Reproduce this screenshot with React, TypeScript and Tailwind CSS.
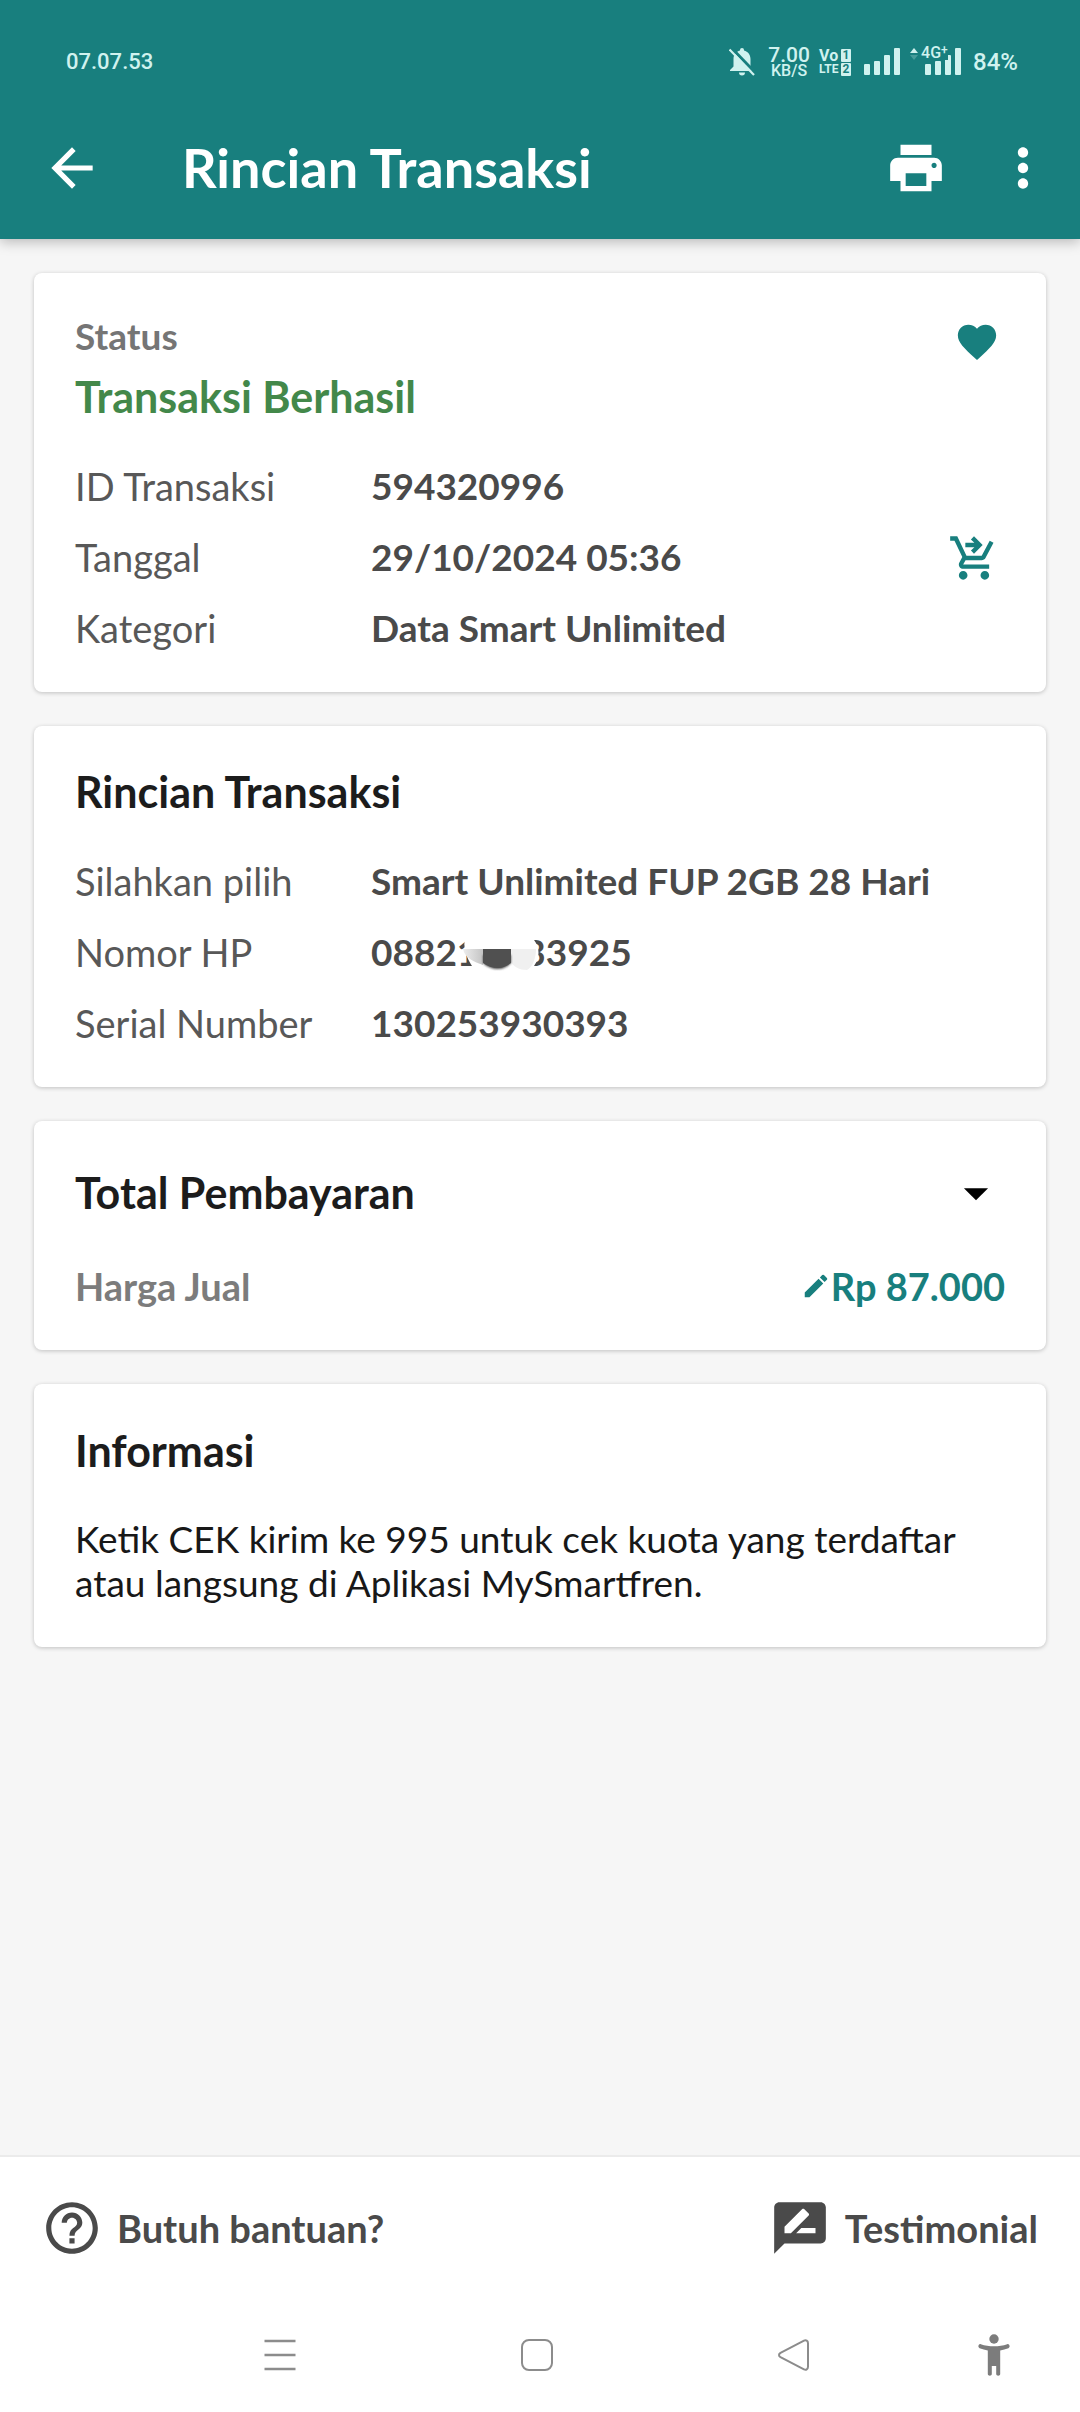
import type { ReactNode } from "react";
import {
  MdArrowBack,
  MdArrowDropDown,
  MdEdit,
  MdFavorite,
  MdHelpOutline,
  MdMoreVert,
  MdPrint,
  MdRateReview,
  MdShoppingCartCheckout,
} from "react-icons/md";

function SignalBars() {
  return (
    <svg width="36" height="28" viewBox="0 0 36 28" fill="currentColor" aria-hidden="true">
      <rect x="0" y="16" width="6" height="11" rx="1" />
      <rect x="10" y="13" width="6" height="14" rx="1" />
      <rect x="20" y="7" width="6" height="20" rx="1" />
      <rect x="30" y="0" width="6" height="27" rx="1" />
    </svg>
  );
}

function StatusBar() {
  return (
    <div className="flex h-[84px] items-center justify-between pt-[40px] pr-[62px] pl-[66px] font-[Roboto] text-[#d0f2ef]">
      <span className="text-[22px] leading-7 font-medium">07.07.53</span>
      <div className="flex items-center">
        <svg width="26" height="28" viewBox="0 0 26 28" aria-hidden="true">
          <path
            fill="currentColor"
            d="M13 0a2 2 0 0 0-2 2v.6C7 3.600 4.500 7 4.500 11v7.500L1 22v1h24v-1l-3.500-3.500V11c0-4-2.500-7.400-6.500-8.400V2a2 2 0 0 0-2-2zM10 24.500a3 3 0 0 0 6 0z"
          />
          <path d="M2.500 0L26 24.500" stroke="#187f7e" strokeWidth="3" />
          <path d="M.5 1.500L25 27" stroke="currentColor" strokeWidth="2.200" />
        </svg>
        <div className="ml-[12px] flex w-[44px] flex-col items-center">
          <span className="text-[21px] leading-[18px] font-medium">7.00</span>
          <span className="text-[16px] leading-[14px] font-medium">KB/S</span>
        </div>
        <div className="ml-[8px] grid grid-cols-[22px_10px] items-center gap-y-[1px] font-bold">
          <span className="text-[16px] leading-[13px]">Vo</span>
          <span className="h-[13px] rounded-[1px] bg-[#d0f2ef] text-center text-[12px] leading-[13px] text-[#187f7e]">1</span>
          <span className="text-[12px] leading-[13px]">LTE</span>
          <span className="h-[13px] rounded-[1px] bg-[#d0f2ef] text-center text-[12px] leading-[13px] text-[#187f7e]">2</span>
        </div>
        <div className="ml-[13px]">
          <SignalBars />
        </div>
        <div className="relative ml-[25px]">
          <SignalBars />
          <span className="absolute -top-[2px] -left-[4px] flex bg-[#187f7e] text-[16px] leading-[14px] font-medium">
            4G<span className="text-[12px] leading-[8px]">+</span>
          </span>
          <svg className="absolute top-0 -left-[15px]" width="8" height="12" viewBox="0 0 8 12" aria-hidden="true">
            <path d="M0 5L4 0l4 5z" fill="currentColor" />
            <path d="M0 7h8l-4 5z" fill="currentColor" opacity=".25" />
          </svg>
        </div>
        <span className="ml-[12px] text-[24px] leading-7 font-medium">84%</span>
      </div>
    </div>
  );
}

function Card({ children, className }: { children: ReactNode; className: string }) {
  return (
    <section className={`rounded-lg bg-white px-[41px] pb-[42px] shadow-[0_1px_4px_rgba(0,0,0,0.22)] ${className}`}>
      {children}
    </section>
  );
}

function Title({ children }: { children: ReactNode }) {
  return <h2 className="text-[43px] leading-[52px] font-bold text-[#1c1c1c]">{children}</h2>;
}

function Row({ label, children }: { label: string; children: ReactNode }) {
  return (
    <div className="flex h-[44px] items-center">
      <dt className="w-[296px] shrink-0 text-[38px] leading-[44px] text-[#585858]">{label}</dt>
      <dd className="text-[37px] leading-[44px] font-bold whitespace-nowrap text-[#4a4a4a]">{children}</dd>
    </div>
  );
}

function Smudge() {
  return (
    <span className="relative inline-block h-[26px] w-[46px]">
      <svg className="absolute -top-[5px] -left-[18px]" width="84" height="40" viewBox="0 0 84 40" aria-hidden="true">
        <defs>
          <linearGradient id="fade" x1="0" x2="1">
            <stop offset="0" stopColor="#ededed" />
            <stop offset="1" stopColor="#c4c4c4" />
          </linearGradient>
          <filter id="soft" x="-10%" y="-10%" width="120%" height="120%">
            <feGaussianBlur stdDeviation="1" />
          </filter>
        </defs>
        <path d="M5 4C20-2 60-2 74 5c6 8 6 17 0 26H12C6 22 3 12 5 4z" fill="#fff" />
        <path d="M3 14h20v16c-9-3-18-7-20-16z" fill="url(#fade)" />
        <path d="M50 14h26c0 8-3 18-9 21-8 0-13-3-17-9z" fill="#f0f0f0" />
        <path d="M23 20h28v8c-4 4-8 6-13 6s-11-2-15-6z" fill="#505050" filter="url(#soft)" />
        <path d="M23 14h28v14c-4 3-8 5-13 5s-11-2-15-5z" fill="#505050" />
      </svg>
    </span>
  );
}

export default function App() {
  return (
    <div className="flex min-h-screen flex-col bg-[#f6f6f6] font-[Lato,sans-serif]">
      <header className="relative bg-[#187f7e] text-white shadow-[0_3px_12px_rgba(0,0,0,0.25)]">
        <StatusBar />
        <div className="flex h-[155px] items-center pt-[12px] pr-[26px] pl-[41px]">
          <button aria-label="Kembali">
            <MdArrowBack size={62} />
          </button>
          <h1 className="ml-[79px] flex-1 text-[54px] leading-[64px] font-bold">Rincian Transaksi</h1>
          <button aria-label="Cetak">
            <MdPrint size={62} />
          </button>
          <button aria-label="Menu lainnya" className="ml-[45px]">
            <MdMoreVert size={62} />
          </button>
        </div>
      </header>

      <main className="flex flex-1 flex-col gap-[34px] px-[34px] pt-[34px]">
        <Card className="relative pt-[41px]">
          <p className="text-[37px] leading-[44px] font-bold text-[#757575]">Status</p>
          <p className="mt-[13px] text-[43px] leading-[52px] font-bold text-[#43884a]">Transaksi Berhasil</p>
          <dl className="mt-[41px] flex flex-col gap-[27px]">
            <Row label="ID Transaksi">594320996</Row>
            <Row label="Tanggal">29/10/2024 05:36</Row>
            <Row label="Kategori">Data Smart Unlimited</Row>
          </dl>
          <button aria-label="Favorit" className="absolute top-[46px] right-[46px] text-[#187f7e]">
            <MdFavorite size={46} />
          </button>
          <button aria-label="Beli lagi" className="absolute top-[259px] right-[46px] text-[#187f7e]">
            <MdShoppingCartCheckout size={52} />
          </button>
        </Card>

        <Card className="pt-[40px]">
          <Title>Rincian Transaksi</Title>
          <dl className="mt-[41px] flex flex-col gap-[27px]">
            <Row label="Silahkan pilih">Smart Unlimited FUP 2GB 28 Hari</Row>
            <Row label="Nomor HP">
              08821
              <Smudge />
              33925
            </Row>
            <Row label="Serial Number">130253930393</Row>
          </dl>
        </Card>

        <Card className="pt-[46px]">
          <div className="flex h-[52px] items-center justify-between">
            <Title>Total Pembayaran</Title>
            <button aria-label="Tampilkan rincian" className="text-black">
              <MdArrowDropDown size={58} />
            </button>
          </div>
          <div className="mt-[45px] flex h-[44px] items-center justify-between text-[38px] leading-[44px]">
            <span className="font-bold text-[#7c7c7c]">Harga Jual</span>
            <button className="flex items-center font-bold text-[#187f7e]">
              <MdEdit size={30} />
              Rp 87.000
            </button>
          </div>
        </Card>

        <Card className="pt-[41px]">
          <Title>Informasi</Title>
          <p className="mt-[40px] text-[37px] leading-[44px] text-[#181818]">
            Ketik CEK kirim ke 995 untuk cek kuota yang terdaftar atau langsung di Aplikasi MySmartfren.
          </p>
        </Card>
      </main>

      <footer className="border-t-2 border-[#ebebeb] bg-white">
        <div className="flex h-[141px] items-center justify-between pr-[42px] pl-[41px] text-[38px] leading-[44px] font-bold text-[#4a4a4a]">
          <a href="#bantuan" className="flex items-center gap-[14px]">
            <MdHelpOutline size={62} />
            Butuh bantuan?
          </a>
          <a href="#testimonial" className="flex items-center gap-[14px]">
            <MdRateReview size={62} />
            Testimonial
          </a>
        </div>
        <nav className="grid h-[114px] grid-cols-[257fr_257fr_257fr_144fr] justify-items-center pr-[14px] pl-[152px] text-[#8c8c8c]">
          <button aria-label="Aplikasi terbaru">
            <svg width="32" height="32" viewBox="0 0 32 32" fill="none" stroke="currentColor" strokeWidth="2.400">
              <path d="M.5 2h31M.5 16h31M.5 30h31" />
            </svg>
          </button>
          <button aria-label="Beranda">
            <svg width="32" height="32" viewBox="0 0 32 32" fill="none" stroke="currentColor" strokeWidth="2">
              <rect x="1" y="1" width="30" height="30" rx="7" />
            </svg>
          </button>
          <button aria-label="Kembali ke layar sebelumnya">
            <svg width="32" height="32" viewBox="0 0 32 32" fill="none" stroke="currentColor" strokeWidth="2">
              <path d="M2.500 13.800L26 1.700c2-1 4 .2 4 2.500v23.600c0 2.300-2 3.500-4 2.500L2.500 18.200c-2-1.200-2-3.200 0-4.400z" />
            </svg>
          </button>
          <button aria-label="Aksesibilitas">
            <svg width="32" height="42" viewBox="0 0 32 42" fill="#7c7c7c">
              <circle cx="16" cy="5" r="4.700" />
              <path d="M2.800 10.200C11 13 21 13 29.200 10.200c2.400-.7 3.400 3.200 1.200 4-2.800 1-5.500 1.800-8.200 2.200V40c0 2.300-4 2.300-4 0v-8h-4.400v8c0 2.300-4 2.300-4 0V16.400c-2.700-.4-5.400-1.200-8.200-2.200-2.200-.8-1.200-4.700 1.200-4z" />
            </svg>
          </button>
        </nav>
      </footer>
    </div>
  );
}
